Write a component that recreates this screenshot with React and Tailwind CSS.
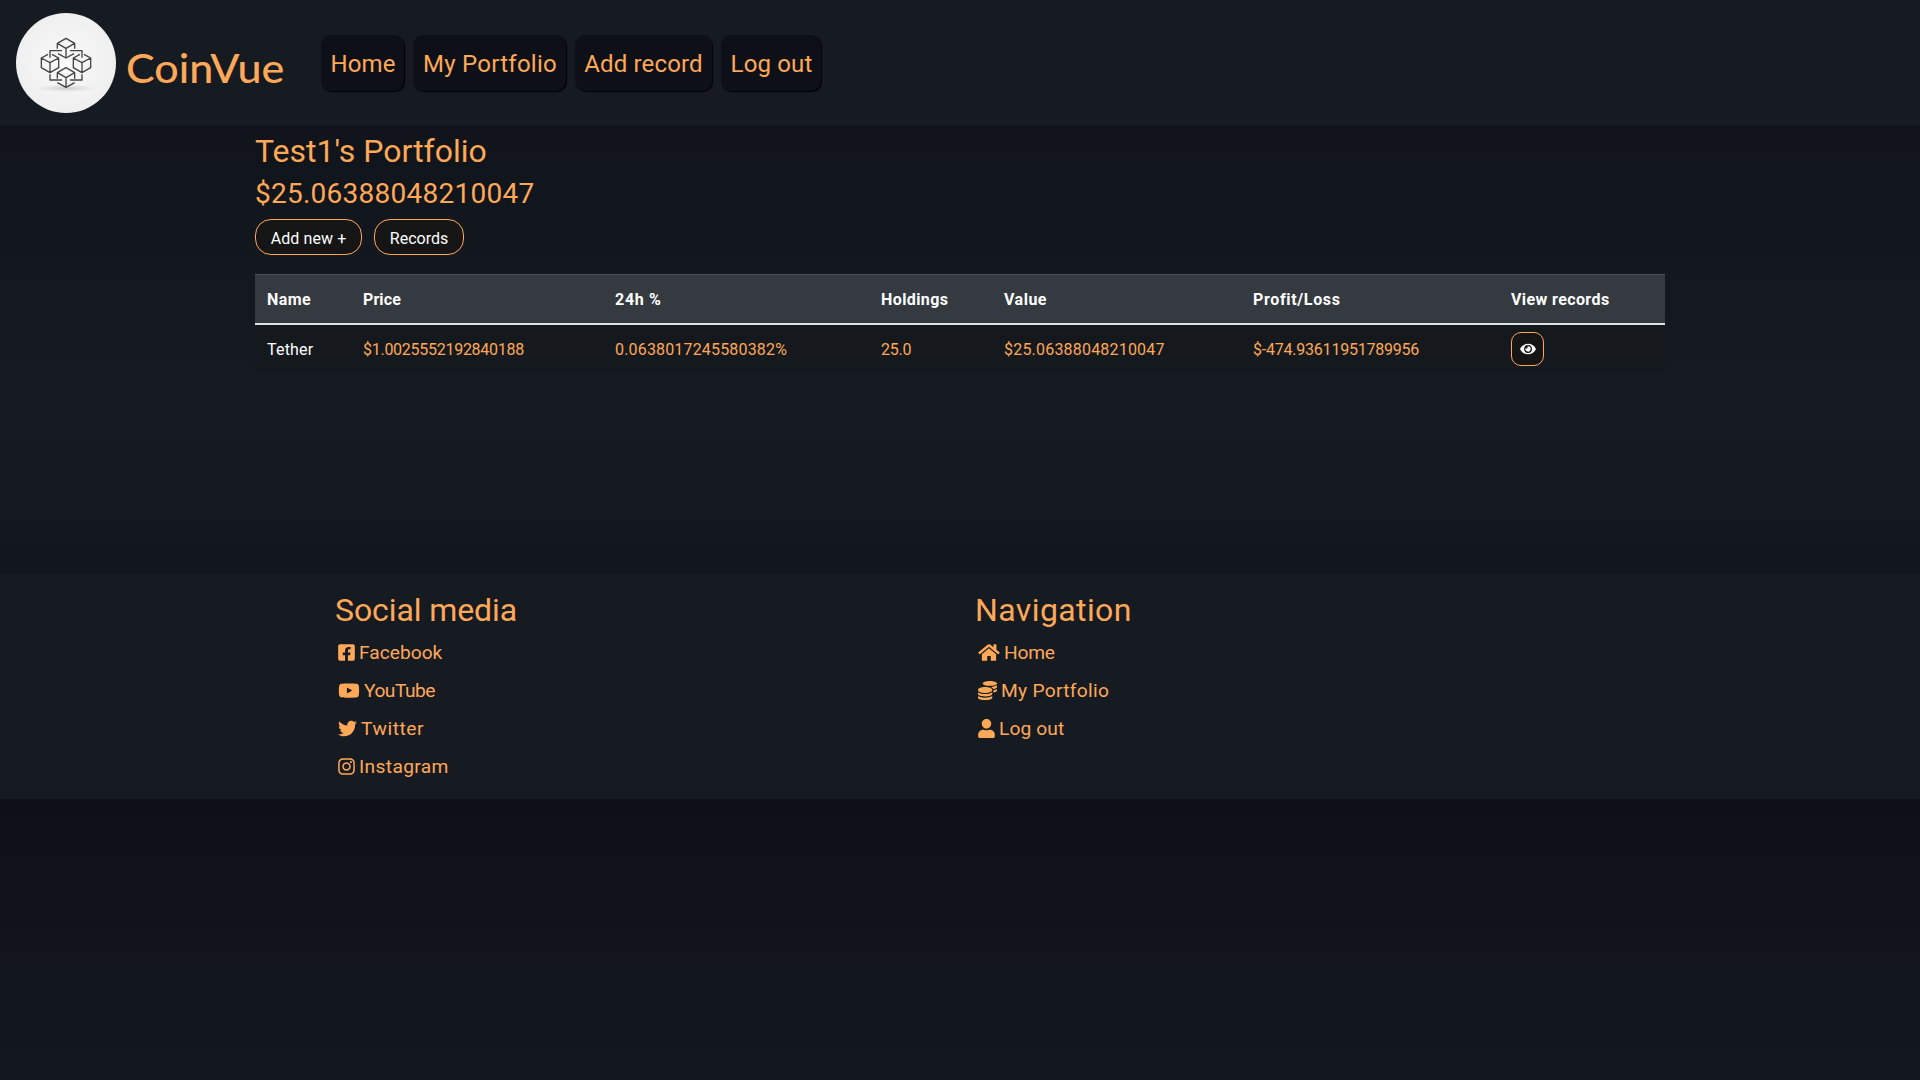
import { FaFacebookSquare, FaYoutube, FaTwitter, FaInstagram, FaHome, FaCoins, FaUser, FaEye } from "react-icons/fa";

const nav = [
  ["Home", "w-[83px] pl-px tracking-[0.1px]"],
  ["My Portfolio", "w-[153px] pl-px tracking-[0.25px]"],
  ["Add record", "w-[137px] tracking-[0.15px]"],
  ["Log out", "w-[100px] pl-px tracking-[0.15px]"],
];

const columns = [
  { head: "Name", value: "Tether", headCls: "tracking-[0.4px]", cls: "pt-0.5 text-white tracking-[0.2px]" },
  { head: "Price", value: "$1.0025552192840188", headCls: "tracking-[0.1px]", cls: "pt-0.5 text-[#ffa858] -tracking-[0.27px]" },
  { head: "24h %", value: "0.0638017245580382%", headCls: "tracking-[0.7px]", cls: "pt-0.5 text-[#ffa858] tracking-[0.17px]" },
  { head: "Holdings", value: "25.0", headCls: "tracking-[0.4px]", cls: "pt-0.5 text-[#ffa858] -tracking-[0.2px]" },
  { head: "Value", value: "$25.06388048210047", headCls: "tracking-[0.5px]", cls: "pt-0.5 text-[#ffa858] tracking-[0.2px]" },
  { head: "Profit/Loss", value: "$-474.93611951789956", headCls: "tracking-[0.65px]", cls: "pt-0.5 text-[#ffa858] -tracking-[0.22px]" },
  { head: "View records", value: null, headCls: "tracking-[0.4px]", cls: "" },
];

const social = [
  [FaFacebookSquare, "Facebook", "w-[17px]", "tracking-[0px]"],
  [FaYoutube, "YouTube", "w-[22px]", "-tracking-[0.5px]"],
  [FaTwitter, "Twitter", "w-[19px]", "tracking-[0.55px]"],
  [FaInstagram, "Instagram", "w-[17px]", "tracking-[0.35px]"],
];
const links = [
  [FaHome, "Home", "w-[22px]", "-tracking-[0.2px]"],
  [FaCoins, "My Portfolio", "w-[19px]", "tracking-[0.3px]"],
  [FaUser, "Log out", "w-[17px]", "tracking-[0.1px]"],
];

function Logo() {
  return (
    <svg viewBox="0 0 300 300" className="size-[100px] shrink-0" fill="none">
      <defs>
        <radialGradient id="disc">
          <stop offset="0" stopColor="#fafafa" />
          <stop offset="1" stopColor="#efefef" />
        </radialGradient>
        <radialGradient id="shade">
          <stop offset="0" stopColor="#cfcfcf" />
          <stop offset="1" stopColor="#cfcfcf" stopOpacity="0" />
        </radialGradient>
      </defs>
      <circle cx="150" cy="150" r="150" fill="url(#disc)" />
      <ellipse cx="151" cy="226" rx="90" ry="11" fill="url(#shade)" />
      <g stroke="#444" strokeWidth="4" strokeLinejoin="round">
        <path d="M124 107V91L150 76L176 91V107M124 91L150 106L176 91M150 106V134M126 122L150 135L174 122" />
        <path d="M102 134V113H138M162 113H198V134" />
        <path d="M76 135L96 124M108 124L128 135V164L102 179L76 164V135L102 149L128 135M102 149V179" />
        <path d="M172 135L192 124M204 124L224 135V164L198 179L172 164V135L198 149L224 135M198 149V179" />
        <path d="M124 197V179L150 164L176 179V197M124 179L150 194L176 179M150 194V223M124 209L150 223L176 209" />
        <path d="M102 184V201H138M162 201H198V184" />
      </g>
    </svg>
  );
}

function LinkColumn({ title, items, spacing }) {
  return (
    <div className="w-[640px]">
      <h2 className={"mb-1 h-[38px] text-[32px] leading-[38px] " + spacing}>{title}</h2>
      <ul className="pl-[3px]">
        {items.map(([Icon, label, width, tracking]) => (
          <li key={label} className="flex h-[38px] items-center gap-1 text-[19.2px]">
            <Icon className={"h-[19px] shrink-0 " + width} />
            <span className={"pt-[3px] " + tracking}>{label}</span>
          </li>
        ))}
      </ul>
    </div>
  );
}

export default function App() {
  return (
    <div className="h-[1080px] bg-[linear-gradient(#0d1117,#161b22_50%,#0d1117)] bg-[length:100%_799px] bg-repeat-y font-[Roboto,sans-serif] text-[#ffa858]">
      <header className="flex h-[125px] items-start bg-[#161b22] pl-4">
        <div className="flex w-[305px] items-start pt-[13px]">
          <Logo />
          <span className="ml-2.5 origin-left scale-x-[1.075] pt-[31px] font-[Lato,sans-serif] text-[40px] font-medium leading-[48px]">CoinVue</span>
        </div>
        <nav className="flex gap-[9px] pt-[35px]">
          {nav.map(([label, cls]) => (
            <a key={label} className={"flex h-14 items-center justify-center whitespace-nowrap rounded-[10px] bg-[#0d1117] pt-0.5 text-[24px] shadow-[1px_1px_1px_#000] " + cls}>
              {label}
            </a>
          ))}
        </nav>
      </header>

      <main className="mx-auto h-[449px] w-[1410px] pt-[7px]">
        <h1 className="text-[32px] leading-[38px]">Test1's Portfolio</h1>
        <h2 className="mt-[7px] text-[28px] leading-[34px] tracking-[0.25px]">$25.06388048210047</h2>
        <div className="mt-[8px] flex gap-[12px] text-[16px] text-white">
          <button className="h-9 w-[107px] rounded-[16px] border border-[#ffa858] bg-[#151515] pt-[3px] tracking-[0.1px]">Add new +</button>
          <button className="h-9 w-[90px] rounded-[16px] border border-[#ffa858] bg-[#151515] pt-[3px]">Records</button>
        </div>
        <table className="mt-[19px] w-full table-fixed border-collapse text-left text-[16px] leading-6">
          <colgroup>
            <col className="w-[96px]" />
            <col className="w-[252px]" />
            <col className="w-[266px]" />
            <col className="w-[123px]" />
            <col className="w-[249px]" />
            <col className="w-[258px]" />
            <col className="w-[166px]" />
          </colgroup>
          <thead>
            <tr className="h-[49px] border-t border-b-2 border-t-[#454d55] border-b-[#dee2e6] bg-[#343a40] text-white">
              {columns.map((c) => (
                <th key={c.head} className={"px-3 pt-0.5 font-bold " + c.headCls}>{c.head}</th>
              ))}
            </tr>
          </thead>
          <tbody>
            <tr className="h-[50px] bg-[linear-gradient(#14181b,#151a20)]">
              {columns.map((c) => (
                <td key={c.head} className={"whitespace-nowrap px-3 " + c.cls}>
                  {c.value ?? (
                    <button className="flex h-[34px] w-[33px] items-center justify-center rounded-[10px] border border-[#ffa858] bg-[#151515] text-white">
                      <FaEye className="h-[14px] w-4" />
                    </button>
                  )}
                </td>
              ))}
            </tr>
          </tbody>
        </table>
      </main>

      <footer className="flex h-[225px] bg-[#161b22] pl-[335px] pt-[17px]">
        <LinkColumn title="Social media" items={social} spacing="-tracking-[0.1px]" />
        <LinkColumn title="Navigation" items={links} spacing="tracking-[0.4px]" />
      </footer>
    </div>
  );
}
